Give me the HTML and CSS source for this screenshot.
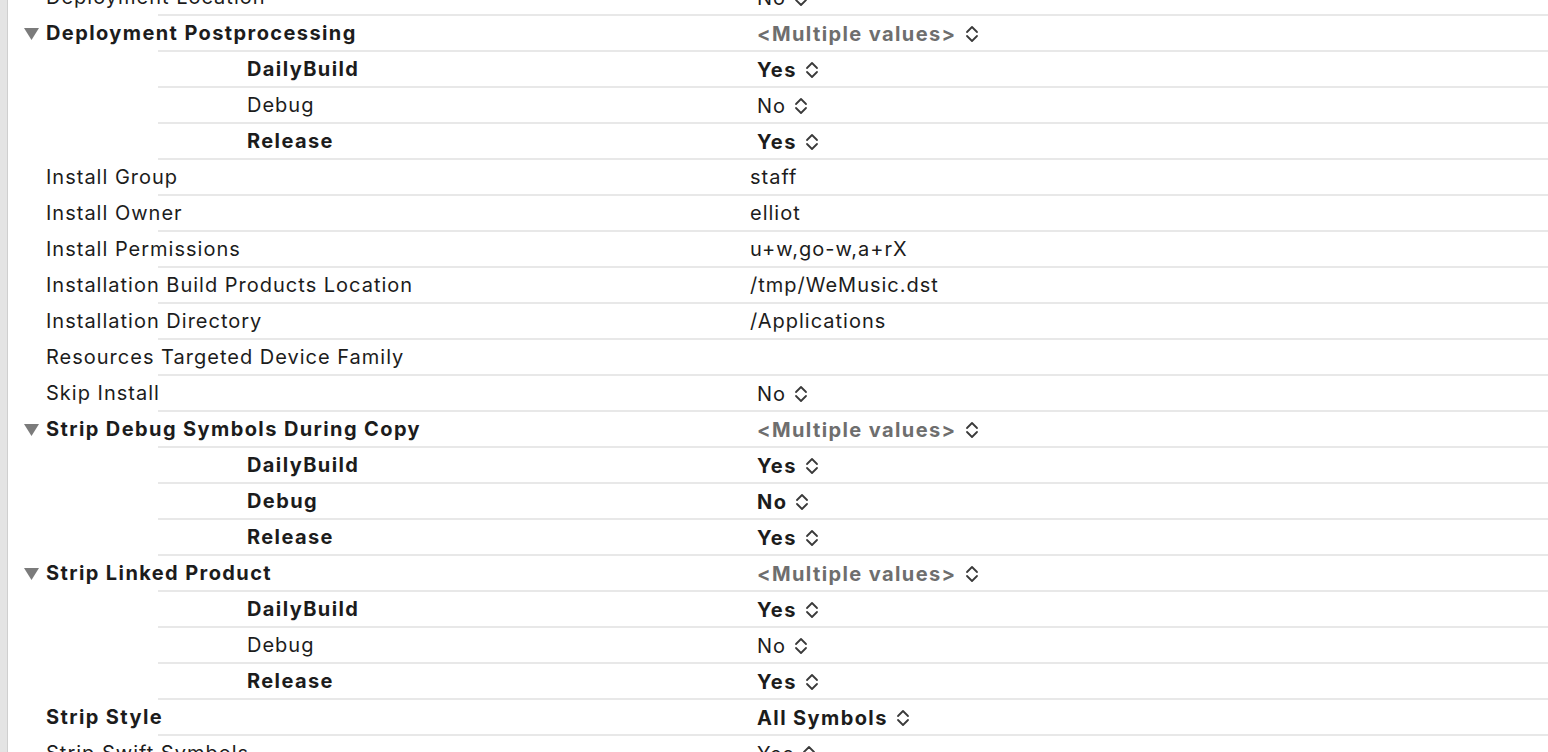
FILE: index.html
```html
<!DOCTYPE html>
<html>
<head>
<meta charset="utf-8">
<link rel="stylesheet" href="styles.css">
</head>
<body>
<div class="page">
  <div class="strip"></div>
  <div class="list">
    <div class="row"><div class="name"><span class="label">Deployment Location</span></div><div class="val popup"><span>No</span><svg class="chev" viewBox="0 0 14 20"><path d="M2 8 L7 3 L12 8 M2 12 L7 17 L12 12"/></svg></div></div>

    <div class="row group"><div class="name"><svg class="tri" viewBox="0 0 15 12"><path d="M0 0 H15 L7.5 12 Z"/></svg><span class="label b">Deployment Postprocessing</span></div><div class="val popup multi"><span>&lt;Multiple values&gt;</span><svg class="chev" viewBox="0 0 14 20"><path d="M2 8 L7 3 L12 8 M2 12 L7 17 L12 12"/></svg></div></div>
    <div class="row sub"><div class="name"><span class="label b">DailyBuild</span></div><div class="val popup b"><span>Yes</span><svg class="chev" viewBox="0 0 14 20"><path d="M2 8 L7 3 L12 8 M2 12 L7 17 L12 12"/></svg></div></div>
    <div class="row sub"><div class="name"><span class="label">Debug</span></div><div class="val popup"><span>No</span><svg class="chev" viewBox="0 0 14 20"><path d="M2 8 L7 3 L12 8 M2 12 L7 17 L12 12"/></svg></div></div>
    <div class="row sub"><div class="name"><span class="label b">Release</span></div><div class="val popup b"><span>Yes</span><svg class="chev" viewBox="0 0 14 20"><path d="M2 8 L7 3 L12 8 M2 12 L7 17 L12 12"/></svg></div></div>

    <div class="row"><div class="name"><span class="label">Install Group</span></div><div class="val text"><span>staff</span></div></div>
    <div class="row"><div class="name"><span class="label">Install Owner</span></div><div class="val text"><span>elliot</span></div></div>
    <div class="row"><div class="name"><span class="label">Install Permissions</span></div><div class="val text"><span>u+w,go-w,a+rX</span></div></div>
    <div class="row"><div class="name"><span class="label">Installation Build Products Location</span></div><div class="val text"><span>/tmp/WeMusic.dst</span></div></div>
    <div class="row"><div class="name"><span class="label">Installation Directory</span></div><div class="val text"><span>/Applications</span></div></div>
    <div class="row"><div class="name"><span class="label">Resources Targeted Device Family</span></div><div class="val text"></div></div>
    <div class="row"><div class="name"><span class="label">Skip Install</span></div><div class="val popup"><span>No</span><svg class="chev" viewBox="0 0 14 20"><path d="M2 8 L7 3 L12 8 M2 12 L7 17 L12 12"/></svg></div></div>

    <div class="row group"><div class="name"><svg class="tri" viewBox="0 0 15 12"><path d="M0 0 H15 L7.5 12 Z"/></svg><span class="label b">Strip Debug Symbols During Copy</span></div><div class="val popup multi"><span>&lt;Multiple values&gt;</span><svg class="chev" viewBox="0 0 14 20"><path d="M2 8 L7 3 L12 8 M2 12 L7 17 L12 12"/></svg></div></div>
    <div class="row sub"><div class="name"><span class="label b">DailyBuild</span></div><div class="val popup b"><span>Yes</span><svg class="chev" viewBox="0 0 14 20"><path d="M2 8 L7 3 L12 8 M2 12 L7 17 L12 12"/></svg></div></div>
    <div class="row sub"><div class="name"><span class="label b">Debug</span></div><div class="val popup b"><span>No</span><svg class="chev" viewBox="0 0 14 20"><path d="M2 8 L7 3 L12 8 M2 12 L7 17 L12 12"/></svg></div></div>
    <div class="row sub"><div class="name"><span class="label b">Release</span></div><div class="val popup b"><span>Yes</span><svg class="chev" viewBox="0 0 14 20"><path d="M2 8 L7 3 L12 8 M2 12 L7 17 L12 12"/></svg></div></div>

    <div class="row group"><div class="name"><svg class="tri" viewBox="0 0 15 12"><path d="M0 0 H15 L7.5 12 Z"/></svg><span class="label b">Strip Linked Product</span></div><div class="val popup multi"><span>&lt;Multiple values&gt;</span><svg class="chev" viewBox="0 0 14 20"><path d="M2 8 L7 3 L12 8 M2 12 L7 17 L12 12"/></svg></div></div>
    <div class="row sub"><div class="name"><span class="label b">DailyBuild</span></div><div class="val popup b"><span>Yes</span><svg class="chev" viewBox="0 0 14 20"><path d="M2 8 L7 3 L12 8 M2 12 L7 17 L12 12"/></svg></div></div>
    <div class="row sub"><div class="name"><span class="label">Debug</span></div><div class="val popup"><span>No</span><svg class="chev" viewBox="0 0 14 20"><path d="M2 8 L7 3 L12 8 M2 12 L7 17 L12 12"/></svg></div></div>
    <div class="row sub"><div class="name"><span class="label b">Release</span></div><div class="val popup b"><span>Yes</span><svg class="chev" viewBox="0 0 14 20"><path d="M2 8 L7 3 L12 8 M2 12 L7 17 L12 12"/></svg></div></div>

    <div class="row"><div class="name"><span class="label b">Strip Style</span></div><div class="val popup b"><span>All Symbols</span><svg class="chev" viewBox="0 0 14 20"><path d="M2 8 L7 3 L12 8 M2 12 L7 17 L12 12"/></svg></div></div>
    <div class="row"><div class="name"><span class="label">Strip Swift Symbols</span></div><div class="val popup"><span>Yes</span><svg class="chev" viewBox="0 0 14 20"><path d="M2 8 L7 3 L12 8 M2 12 L7 17 L12 12"/></svg></div></div>
  </div>
</div>
</body>
</html>
```

FILE: styles.css
```css
html, body {
  margin: 0;
  padding: 0;
  background: #ffffff;
  overflow: hidden;
}

.page {
  display: flex;
  height: 752px;
  font-family: Inter, "Liberation Sans", sans-serif;
  font-size: 20px;
  letter-spacing: 1px;
  color: #1c1c1c;
}

.strip {
  width: 7px;
  flex: 0 0 7px;
  background: #e4e4e4;
  border-right: 1px solid #cfcfcf;
}

.list {
  flex: 1;
  margin-top: -20px;
}

.row {
  display: grid;
  grid-template-columns: 742px 1fr;
  height: 33px;
  padding-top: 1px;
  padding-bottom: 2px;
  background: linear-gradient(#e8e8e8, #e8e8e8) no-repeat;
  background-position: 150px 100%;
  background-size: calc(100% - 150px) 2px;
}

.name {
  display: flex;
  align-items: center;
  padding-left: 38px;
  white-space: nowrap;
}

.row.group .name {
  padding-left: 16px;
}

.row.sub .name {
  padding-left: 239px;
}

.tri {
  width: 15px;
  height: 12px;
  margin-right: 7px;
  fill: #7b7b7b;
}

.label {
  line-height: 33px;
}

.b {
  font-weight: 700;
  letter-spacing: 1.4px;
}

.val {
  display: flex;
  align-items: center;
  white-space: nowrap;
}

.val.popup {
  padding-left: 7px;
  gap: 8px;
}

.val.multi {
  font-weight: 700;
  letter-spacing: 1.4px;
  color: #6e6e6e;
}

.val.text {
  padding-bottom: 2px;
}

.chev {
  width: 14px;
  height: 20px;
  fill: none;
  stroke: #3a3a3a;
  stroke-width: 1.8;
  stroke-linecap: round;
  stroke-linejoin: round;
}
```
